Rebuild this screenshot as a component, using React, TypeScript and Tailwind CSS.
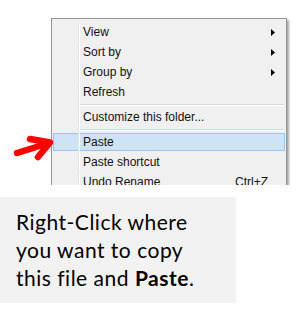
const MenuRow = ({ label, sub, shortcut, active }: { label: string; sub?: boolean; shortcut?: string; active?: boolean }) => (
  <div className="h-[20px] flex">
    <div
      className={
        active
          ? 'flex-1 flex items-center mx-px my-px border border-[#99c7ee] bg-[#cfe3f6]'
          : 'flex-1 flex items-center mx-px my-px border border-transparent'
      }
    >
      <div className="w-[24px] h-full" />
      <div className="w-[2px] self-stretch -my-px border-l border-[#e2e3e3] border-r border-r-white" />
      <span className="pl-[3px] flex-1">{label}</span>
      {shortcut && <span className="pr-[16px]">{shortcut}</span>}
      {sub && (
        <svg width="4" height="7" viewBox="0 0 4 7" className="mr-[9px]">
          <path d="M0 0 L4 3.5 L0 7 Z" fill="#000" />
        </svg>
      )}
    </div>
  </div>
);

const Separator = () => (
  <div className="h-[5px] flex">
    <div className="w-[26px]" />
    <div className="w-[2px] border-l border-[#e2e3e3] border-r border-r-white" />
    <div className="flex-1 flex flex-col justify-center pr-[2px]">
      <div className="h-px bg-[#d7d7d7]" />
      <div className="h-px bg-white" />
    </div>
  </div>
);

export default function App() {
  return (
    <div className="w-[300px] h-[311px] bg-white relative overflow-hidden">
      {/* Context menu, cut off at the bottom */}
      <div className="pt-[18px] pl-[51px]">
        <div className="w-[240px] h-[167px] overflow-hidden">
          <div
            className="w-[236px] h-[220px] bg-[#f0f0f0] border border-[#979797] pt-[3px] shadow-[2px_2px_2px_rgba(0,0,0,0.35)] text-[12px] text-[#111]"
            style={{ fontFamily: '"Liberation Sans", Arial, sans-serif' }}
          >
            <MenuRow label="View" sub />
            <MenuRow label="Sort by" sub />
            <MenuRow label="Group by" sub />
            <MenuRow label="Refresh" />
            <Separator />
            <MenuRow label="Customize this folder..." />
            <Separator />
            <MenuRow label="Paste" active />
            <MenuRow label="Paste shortcut" />
            <MenuRow label="Undo Rename" shortcut="Ctrl+Z" />
          </div>
        </div>
      </div>

      {/* Caption box */}
      <div
        className="mt-[12px] w-[236px] h-[106px] bg-[#f2f2f2] pl-[16px] pt-[11px] text-[21px] leading-[28px] tracking-[0.5px] text-black"
        style={{ fontFamily: 'Lato, "Open Sans", sans-serif' }}
      >
        Right-Click where
        <br />
        you want to copy
        <br />
        this file and <b>Paste</b>.
      </div>

      {/* Red arrow pointing at Paste */}
      <svg className="absolute left-0 top-0" width="60" height="170" viewBox="0 0 60 170">
        <g stroke="#ff0000" strokeWidth="6.5" strokeLinecap="round" strokeLinejoin="round" fill="none">
          <path d="M17 153 L49 143" />
          <path d="M30 139 L50 142.5 L38 157" />
        </g>
      </svg>
    </div>
  );
}
